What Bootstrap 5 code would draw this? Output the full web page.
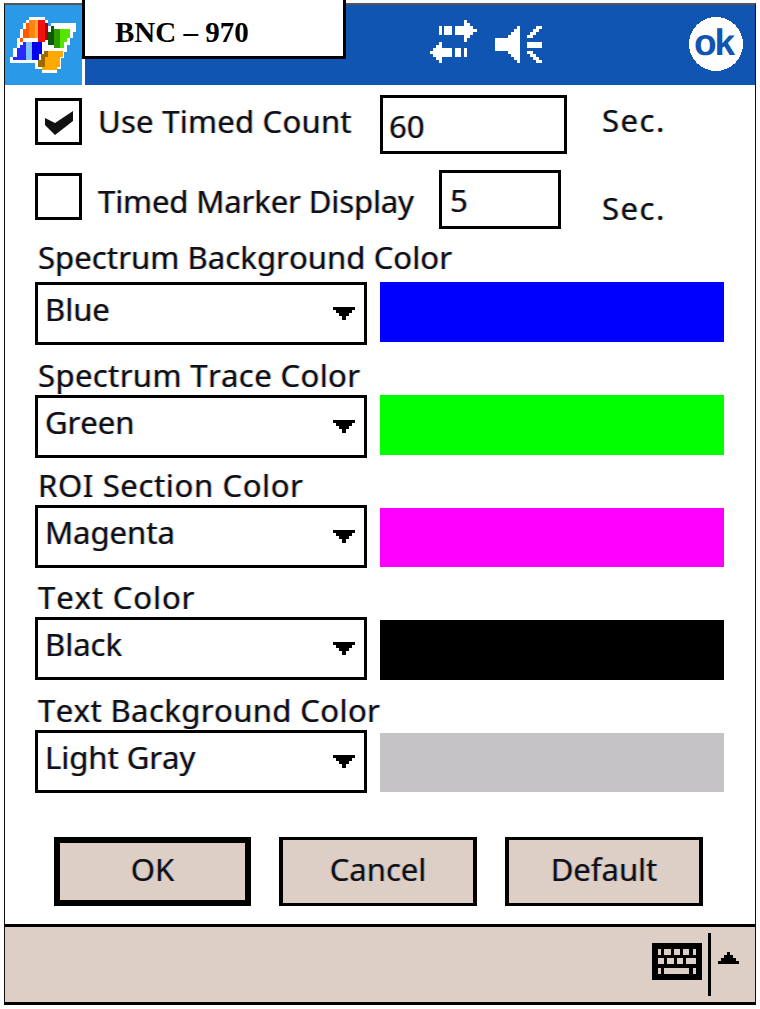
<!DOCTYPE html>
<html lang="en">
<head>
<meta charset="utf-8">
<title>BNC – 970</title>
<link href="https://cdn.jsdelivr.net/npm/bootstrap@5.3.0/dist/css/bootstrap.min.css" rel="stylesheet">
<style>
html,body{background:#fff;margin:0;overflow:hidden}
.device{position:relative;width:752px;height:1002px;margin:3px 0 0 4px;border:1px solid #111;border-top:2px solid #555;border-bottom:3px solid #000;box-sizing:border-box;
  font-family:"Noto Sans","DejaVu Sans",sans-serif;font-size:31px;font-kerning:none;color:#101018;text-shadow:-1px 0 rgba(200,120,30,.4),1px 0 rgba(20,110,200,.4)}
.title-bar{height:80px}
.start-tile{width:77px;background:#2a99e8;padding-top:5px}
.white-gap{width:3px}
.blue-tile{background:#1155b3;padding-left:340px}
.title-box{position:absolute;left:77px;top:-5px;width:264px;height:59px;background:#fff;border:3px solid #000;border-top:0;padding:15px 0 0 30px;
  font:bold 29px/34px "Liberation Serif",serif;color:#000;text-shadow:none}
svg{display:block;shape-rendering:crispEdges}
.arrows-svg{margin-top:10px}
.ok-svg{margin:5px 0 0 130px}
.ok-svg text{font:bold 37px "Liberation Sans",sans-serif;letter-spacing:-2px;text-shadow:none;text-rendering:geometricPrecision}
.form-pane{padding:10px 0 0 30px;height:840px}
.timed-row{height:59px}
.timed-row.second{margin-top:16px}
.tick.form-check-input{appearance:none;flex:none;width:47px;height:47px;margin:3px 16px 0 0;background:#fff no-repeat center/100%;border:3px solid #000;border-radius:0}
.tick.form-check-input:checked{background-color:#fff;border-color:#000;background-image:url("data:image/svg+xml,%3Csvg xmlns='http://www.w3.org/2000/svg' viewBox='0 0 41 41'%3E%3Cpath d='M7 17l10 5 18-12v10L17 34 7 24z' fill='%23111'/%3E%3C/svg%3E")}
.tick.form-check-input:focus{box-shadow:none;border-color:#000}
.tick-text{flex:none;width:282px;margin:0;line-height:52px;white-space:nowrap;letter-spacing:.27px}
.second .tick-text{width:341px;line-height:62px;letter-spacing:-.1px}
.num-field.form-control{flex:none;height:59px;background:#fff;border:3px solid #000;border-radius:0;padding:3px 6px 0;font:inherit;color:inherit;text-shadow:inherit;box-shadow:none}
.num-field.wide.form-control{width:187px}
.num-field.thin.form-control{width:122px;padding:1px 0 0 8px}
.sec-text{line-height:50px;white-space:nowrap;letter-spacing:1.5px}
.sec-a{margin-left:35px}
.sec-b{margin-left:41px;padding-top:13px}
.color-grid{display:grid;grid-template-columns:332px 344px;column-gap:13px;margin-top:14px}
.color-label{grid-column:1/3;height:30px;line-height:28px;margin:0 0 4px 3px;white-space:nowrap}
.color-label.first{margin-bottom:9px;letter-spacing:.1px}
.track-trace{letter-spacing:.4px}.track-roi{letter-spacing:.65px}.track-text{letter-spacing:.9px}.track-textbg{letter-spacing:.43px}
.pick.form-select{width:332px;height:63px;border:3px solid #000;border-radius:0;padding:0 40px 8px 7px;font:inherit;color:inherit;text-shadow:inherit;box-shadow:none;appearance:none;
  background:#fff url("data:image/svg+xml,%3Csvg xmlns='http://www.w3.org/2000/svg' width='22' height='13' shape-rendering='crispEdges'%3E%3Cpath d='M0 0h22v3h-3v3h-3v3h-3v4H9V9H6V6H3V3H0z' fill='%23000'/%3E%3C/svg%3E") no-repeat right 9px center}
.swatch{height:60px}
.swatch.low{height:59px;margin-top:3px}
.swatch.low.full{height:60px}
.after-a{margin-top:16px}.after-b{margin-top:13px}.after-c{margin-top:15px}
.blue-fill{background:#00f}.green-fill{background:#0f0}.magenta-fill{background:#f0f}.black-fill{background:#000}.gray-fill{background:#c6c3c6}
.button-row{margin:44px 0 0 19px;gap:28px}
.dlg-btn.btn{width:198px;height:69px;background:#ddcfc6;border-style:solid;border-color:#000;border-width:3px 4px;border-radius:0;padding:0 0 4px;font:inherit;color:inherit;text-shadow:inherit}
.dlg-btn.main.btn{width:197px;border-width:6px}
.dlg-btn.btn:hover,.dlg-btn.btn:active{background:#ddcfc6;border-color:#000;color:inherit}
.task-bar{height:75px;background:#ddcfc6;border-top:3px solid #000;box-sizing:content-box}
.kbd-svg{margin-left:640px}
</style>
</head>
<body>
<div class="device d-flex flex-column">
  <div class="title-bar d-flex">
    <div class="start-tile">
      <svg width="80" height="70" viewBox="0 0 240 210" aria-label="Start">
        <path fill="#fff" d="M72 20h48v10h10v18h9v-9h56v1h18v25h-9v20h-9v20h-9v20h-9v20h-9v33h-13v10h-45v-10H90v-18H15v-20h10v-25h11V85h9V58h9V40h9V30h9z"/>
        <path fill="#ff5a00" d="M54 58h9v-18h9v45H54z"/>
        <path fill="#ff8410" d="M72 30h18v55H72z"/>
        <path fill="#ffa828" d="M90 30h9v55h-9z"/>
        <path fill="#f01010" d="M99 30h21v65H99z"/>
        <path fill="#a80000" d="M120 39h10v50h-10z"/>
        <path fill="#ff5a00" d="M45 84h9v11h-9z"/>
        <path fill="#0a5a0a" d="M130 66h9V48h9v57h-18z"/>
        <path fill="#309a00" d="M148 58h18v57h-18z"/>
        <path fill="#55e600" d="M166 58h29v27h-9v10h-9v20h-11z"/>
        <path fill="#2828ff" d="M36 115h9v-10h9V95h9v56H25v-11h11z"/>
        <path fill="#7fc0ff" d="M63 95h18v56H63z"/>
        <path fill="#0000f0" d="M81 95h30v37h-9v19H81z"/>
        <path fill="#9a6a00" d="M108 150h1v-18h9v-10h18v48H99v-20z"/>
        <path fill="#ffa800" d="M120 170v-30h10v-18h45v18h-9v30h-11v10h-45v-10z"/>
      </svg>
    </div>
    <div class="white-gap"></div>
    <div class="blue-tile d-flex flex-grow-1">
      <svg class="arrows-svg" width="125" height="55" viewBox="0 0 375 165" fill="#fff" aria-label="Connectivity">
        <path d="M42 33h9v27h-9zM57 33h24v27H57zM90 33h27V15h9v9h9v9h9v9h12v9h-12v9h-9v10h-9v10h-9V60H90zM15 108h9v-9h9v-9h9v-9h9v18h30v27H51v18h-9v-9h-9v-9h-9v-9h-9zM90 99h18v27H90zM117 99h9v27h-9z"/>
        <path d="M210 69h39v-9h9v-9h9v-9h9v-9h9v111h-9v-9h-9v-9h-9v-9h-9v-9h-39zM333 33h18v9h-9v9h-9v9h-9v9h-18v-9h9v-9h9v-9h9zM306 81h45v18h-45zM306 108h18v9h9v9h9v9h9v9h-18v-9h-9v-9h-9v-9h-9z"/>
      </svg>
      <svg class="ok-svg" width="70" height="70" viewBox="0 0 70 70" aria-label="OK">
        <circle cx="36" cy="34" r="27" fill="#fff"/>
        <text x="14" y="45" fill="#1155b3">ok</text>
      </svg>
    </div>
  </div>
  <div class="title-box">BNC – 970</div>

  <form class="form-pane">
    <div class="timed-row d-flex align-items-start">
      <input class="tick form-check-input" type="checkbox" id="useTimed" checked>
      <label class="tick-text" for="useTimed">Use Timed Count</label>
      <input class="num-field wide form-control" type="text" value="60" aria-label="Timed count seconds">
      <span class="sec-text sec-a">Sec.</span>
    </div>
    <div class="timed-row second d-flex align-items-start">
      <input class="tick form-check-input" type="checkbox" id="timedMarker">
      <label class="tick-text" for="timedMarker">Timed Marker Display</label>
      <input class="num-field thin form-control" type="text" value="5" aria-label="Marker seconds">
      <span class="sec-text sec-b">Sec.</span>
    </div>
    <div class="color-grid">
      <label class="color-label first">Spectrum Background Color</label>
      <select class="pick form-select" aria-label="Spectrum Background Color"><option>Blue</option></select>
      <div class="swatch blue-fill"></div>

      <label class="color-label after-a track-trace">Spectrum Trace Color</label>
      <select class="pick form-select" aria-label="Spectrum Trace Color"><option>Green</option></select>
      <div class="swatch green-fill"></div>

      <label class="color-label after-b track-roi">ROI Section Color</label>
      <select class="pick form-select" aria-label="ROI Section Color"><option>Magenta</option></select>
      <div class="swatch low magenta-fill"></div>

      <label class="color-label after-c track-text">Text Color</label>
      <select class="pick form-select" aria-label="Text Color"><option>Black</option></select>
      <div class="swatch low full black-fill"></div>

      <label class="color-label after-a track-textbg">Text Background Color</label>
      <select class="pick form-select" aria-label="Text Background Color"><option>Light Gray</option></select>
      <div class="swatch low gray-fill"></div>
    </div>
    <div class="button-row d-flex">
      <button type="button" class="dlg-btn main btn">OK</button>
      <button type="button" class="dlg-btn btn">Cancel</button>
      <button type="button" class="dlg-btn btn">Default</button>
    </div>
  </form>

  <div class="task-bar mt-auto">
    <svg class="kbd-svg" width="105" height="75" viewBox="0 6 315 225" aria-label="Keyboard">
      <path fill="#000" d="M21 54h150v111H21z"/>
      <path fill="#ddcfc6" d="M39 72h9v18h-9zM57 72h21v18H57zM87 72h18v18H87zM114 72h18v18h-18zM144 72h9v18h-9zM39 99h18v18H39zM66 99h21v18H66zM96 99h18v18H96zM123 99h30v18h-30zM39 129h9v18h-9zM57 129h75v18H57zM144 129h9v18h-9z"/>
      <path fill="#000" d="M189 24h9v189h-9zM246 81h9v9h9v9h9v9h9v9h-63v-9h9v-9h9v-9h9z"/>
    </svg>
  </div>
</div>
<script src="https://cdn.jsdelivr.net/npm/bootstrap@5.3.0/dist/js/bootstrap.bundle.min.js"></script>
</body>
</html>
